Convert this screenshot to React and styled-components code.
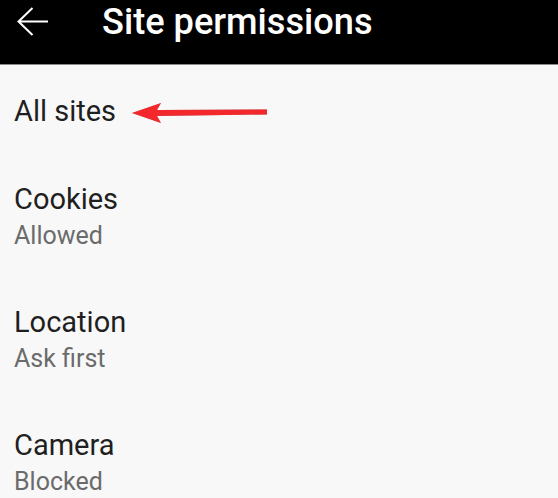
import React from "react";
import styled, { createGlobalStyle } from "styled-components";

const Global = createGlobalStyle`
  html, body { margin: 0; padding: 0; background: #f8f8f8; }
  body { font-family: Roboto, "Noto Sans", "Liberation Sans", sans-serif; }
`;

const Page = styled.div`
  width: 558px;
  height: 498px;
  overflow: hidden;
  background: #f8f8f8;
`;

const Header = styled.header`
  height: 64px;
  background: #000;
  border-bottom: 1px solid #8a8a8a;
  display: flex;
  align-items: flex-start;
`;

const BackButton = styled.button`
  width: 102px;
  height: 44px;
  padding: 0 0 0 17px;
  border: 0;
  background: transparent;
  display: flex;
  align-items: center;
  justify-content: flex-start;
  color: #fff;
`;

const Title = styled.h1`
  margin: 0;
  font-size: 36.2px;
  line-height: 44px;
  font-weight: 500;
  color: #fff;
  letter-spacing: 0;
`;

const List = styled.div`
  display: flex;
  flex-direction: column;
`;

const Row = styled.div`
  padding: 29px 14px 24px;
  display: flex;
  flex-direction: column;
  align-items: flex-start;
`;

const TitleLine = styled.div`
  display: flex;
  align-items: center;
`;

const RowTitle = styled.div`
  font-size: 29px;
  line-height: 35px;
  color: #1f1f1f;
`;

const RowSub = styled.div`
  margin-top: 3px;
  font-size: 25px;
  line-height: 32px;
  color: #6b6b6b;
`;

const Pointer = styled.svg`
  margin-left: 16px;
  margin-top: 2px;
  filter: drop-shadow(0.5px 0.5px 0.6px rgba(0,0,0,0.35));
`;

const BackArrow = () => (
  <svg width="32" height="30" viewBox="0 0 32 30" fill="none">
    <path d="M1.5 14.5 H31 M15.5 1 L1.5 14.5 L15.5 28" stroke="#fff" strokeWidth="2" />
  </svg>
);

const RedArrow = () => (
  <Pointer width="136" height="22" viewBox="0 0 136 22">
    <polygon points="0,11 29,1 25,8 135,7.5 135,12.5 25,14 29,21" fill="#f2282c" />
  </Pointer>
);

const items = [
  { title: "Cookies", sub: "Allowed" },
  { title: "Location", sub: "Ask first" },
  { title: "Camera", sub: "Blocked" },
];

export default function App() {
  return (
    <Page>
      <Global />
      <Header>
        <BackButton aria-label="Back">
          <BackArrow />
        </BackButton>
        <Title>Site permissions</Title>
      </Header>
      <List>
        <Row>
          <TitleLine>
            <RowTitle>All sites</RowTitle>
            <RedArrow />
          </TitleLine>
        </Row>
        {items.map((it) => (
          <Row key={it.title}>
            <RowTitle>{it.title}</RowTitle>
            <RowSub>{it.sub}</RowSub>
          </Row>
        ))}
      </List>
    </Page>
  );
}
